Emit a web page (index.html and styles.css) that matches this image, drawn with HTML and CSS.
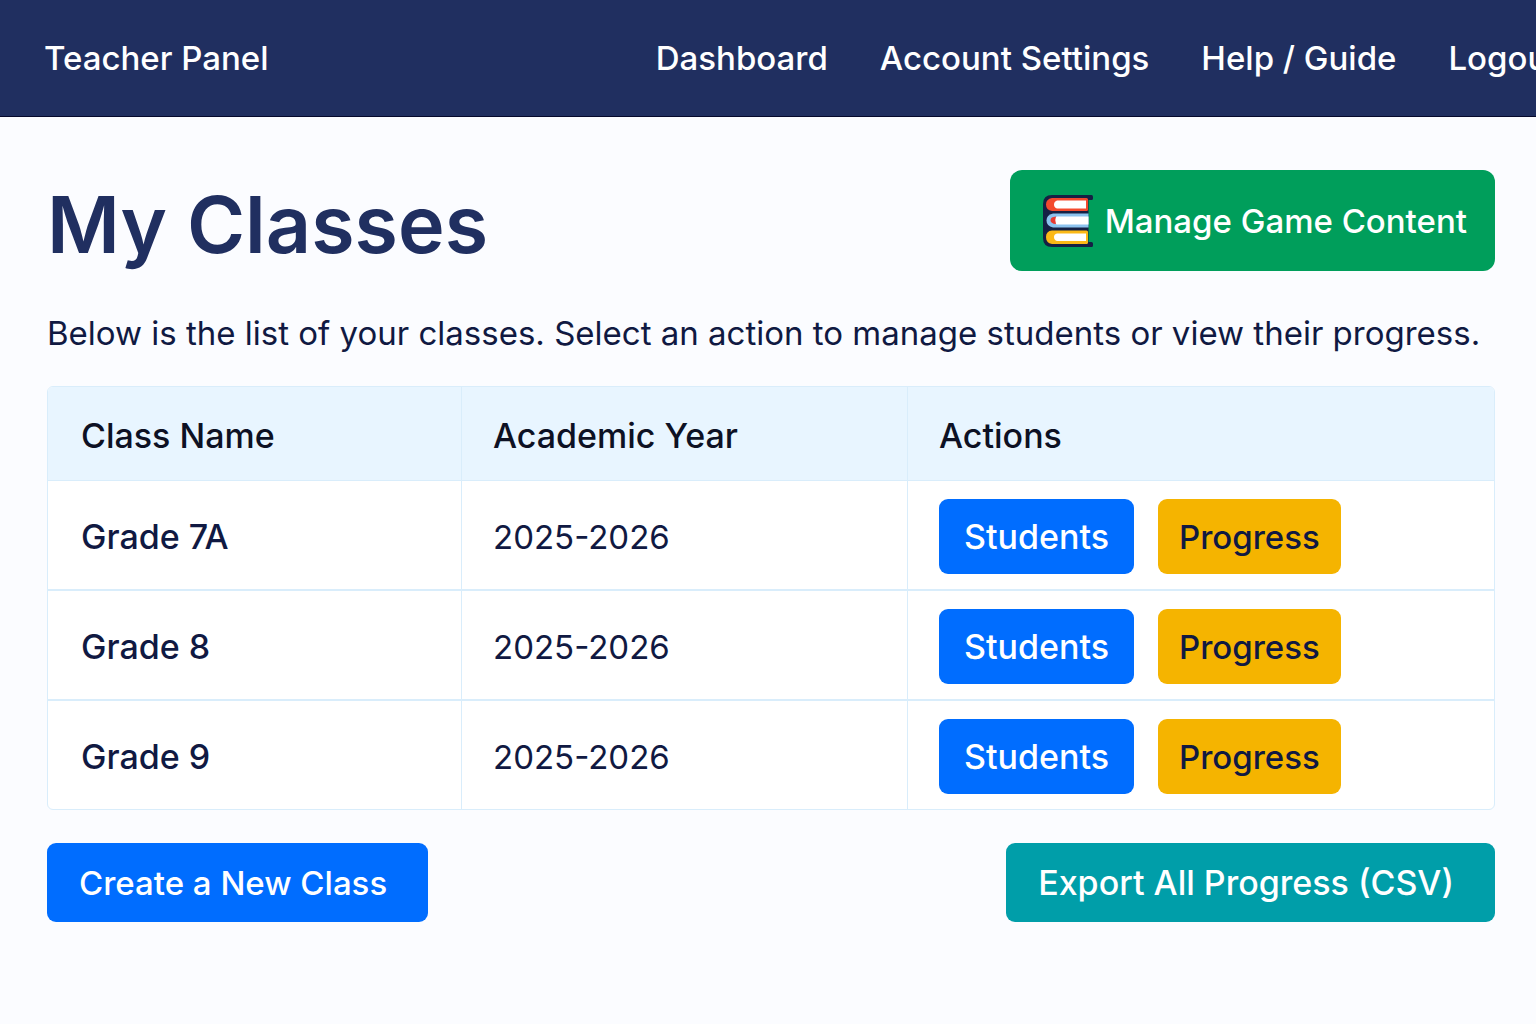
FILE: index.html
```html
<!DOCTYPE html>
<html lang="en">
<head>
  <meta charset="utf-8">
  <meta name="viewport" content="width=device-width, initial-scale=1">
  <title>Teacher Panel</title>
  <link rel="stylesheet" href="styles.css">
</head>
<body>
  <header class="topbar">
    <div class="brand">Teacher Panel</div>
    <nav class="nav">
      <a href="#dashboard">Dashboard</a>
      <a href="#account">Account Settings</a>
      <a href="#help">Help / Guide</a>
      <a href="#logout">Logout</a>
    </nav>
  </header>

  <main class="page">
    <div class="title-row">
      <h1>My Classes</h1>
      <button type="button" class="btn btn-manage">
        <svg class="books" viewBox="0 0 50 52" aria-hidden="true">
          <path d="M9 0H48.500Q50 0 50 2V3.500Q50 5 48.500 5H45.500V47H48.500Q50 47 50 48.500V50.500Q50 52 48.500 52H9Q0 52 0 43V9Q0 0 9 0Z" fill="#152044"/>
          <path d="M9 3H43.500Q45 3 45 4.500V14.500Q45 16 43.500 16H9Q3 15 3 9.500T9 3Z" fill="#f34a2e"/>
          <path d="M14 5.500H43V13.500H14Q11 12.500 11 9.500T14 5.500Z" fill="#fff"/>
          <path d="M10 18.500H45.500V32.500H10Q3.500 31 3.500 25.500T10 18.500Z" fill="#8cc3ee"/>
          <path d="M14 21.500H45.500V29.500H14Q11 28.500 11 25.500T14 21.500Z" fill="#fff"/>
          <path d="M13 21.500Q11.500 25 13 29Q7.500 28.500 7.500 25.200T13 21.500Z" fill="#e93a30"/>
          <path d="M9 35.500H43.500Q45 35.500 45 37V47.500Q45 49 43.500 49H9Q3 48 3 42T9 35.500Z" fill="#fbb917"/>
          <path d="M14 38.500H43V46H14Q11 45 11 42T14 38.500Z" fill="#fff"/>
        </svg>
        Manage Game Content
      </button>
    </div>

    <p class="intro">Below is the list of your classes. Select an action to manage students or view their progress.</p>

    <table class="classes">
      <colgroup>
        <col class="col-name">
        <col class="col-year">
        <col>
      </colgroup>
      <thead>
        <tr><th scope="col">Class Name</th><th scope="col">Academic Year</th><th scope="col">Actions</th></tr>
      </thead>
      <tbody>
        <tr>
          <th scope="row">Grade 7A</th>
          <td>2025-2026</td>
          <td><div class="actions"><button type="button" class="btn btn-students">Students</button><button type="button" class="btn btn-progress">Progress</button></div></td>
        </tr>
        <tr>
          <th scope="row">Grade 8</th>
          <td>2025-2026</td>
          <td><div class="actions"><button type="button" class="btn btn-students">Students</button><button type="button" class="btn btn-progress">Progress</button></div></td>
        </tr>
        <tr>
          <th scope="row">Grade 9</th>
          <td>2025-2026</td>
          <td><div class="actions"><button type="button" class="btn btn-students">Students</button><button type="button" class="btn btn-progress">Progress</button></div></td>
        </tr>
      </tbody>
    </table>

    <div class="footer-row">
      <button type="button" class="btn btn-create">Create a New Class</button>
      <button type="button" class="btn btn-export">Export All Progress (CSV)</button>
    </div>
  </main>
</body>
</html>
```
FILE: styles.css
```css
* {
  box-sizing: border-box;
}

body {
  margin: 0;
  background: #fbfcff;
  color: #101942;
  font-family: Inter, "Liberation Sans", sans-serif;
  font-size: 33px;
  line-height: 44px;
}

.topbar {
  display: flex;
  align-items: center;
  padding: 36px 0 36px 44px;
  overflow: hidden;
  background: #202f60;
  border-bottom: 1px solid #06092c;
  color: #fff;
  font-weight: 500;
  white-space: nowrap;
}

.brand {
  flex: 0 0 41%;
}

.nav {
  display: flex;
  gap: 52px;
}

.nav a {
  color: inherit;
  text-decoration: none;
}

.page {
  padding: 53px 41px 48px 47px;
}

.title-row,
.footer-row {
  display: flex;
  justify-content: space-between;
}

h1 {
  margin: 6px 0 0;
  color: #202f60;
  font-size: 79px;
  font-weight: 600;
  line-height: 96px;
}

.intro {
  margin: 39px 0 31px;
}

.btn {
  display: flex;
  align-items: center;
  justify-content: center;
  border: 0;
  border-radius: 9px;
  color: #fff;
  font: inherit;
  font-weight: 500;
  white-space: nowrap;
  cursor: pointer;
}

.btn-manage {
  gap: 12px;
  height: 101px;
  padding: 0 28px 0 33px;
  border-radius: 12px;
  background: #009e5b;
}

.books {
  width: 50px;
  height: 52px;
}

.classes {
  width: 100%;
  table-layout: fixed;
  border: 1px solid #d9edfb;
  border-radius: 6px;
  border-spacing: 0;
  overflow: hidden;
  background: #fff;
}

.col-name {
  width: 414px;
}

.col-year {
  width: 446px;
}

.classes th,
.classes td {
  padding: 18px 31px 15px;
  text-align: left;
  border-right: 1px solid #d9edfb;
  border-bottom: 2px solid #d9edfb;
}

.classes th {
  font-size: 34px;
  font-weight: 500;
}

.classes th:first-child {
  padding-left: 33px;
}

.classes td:last-child,
.classes th:last-child {
  border-right: 0;
}

.classes tbody tr:last-child > * {
  border-bottom: 0;
}

.classes thead th {
  height: 94px;
  padding-top: 20px;
  border-bottom-width: 1px;
  background: #e8f5ff;
  color: #0d1124;
}

.actions {
  display: flex;
  gap: 24px;
}

.btn-students,
.btn-progress {
  height: 75px;
}

.btn-students {
  padding: 0 25px;
  background: #006dff;
  font-size: 34px;
}

.btn-progress {
  padding: 0 21px;
  background: #f5b400;
  color: #101942;
}

.footer-row {
  margin-top: 33px;
}

.btn-create,
.btn-export {
  height: 79px;
  padding: 0 41px 0 32px;
}

.btn-create {
  background: #006dff;
}

.btn-export {
  background: #009ea9;
  font-size: 34px;
}
```
